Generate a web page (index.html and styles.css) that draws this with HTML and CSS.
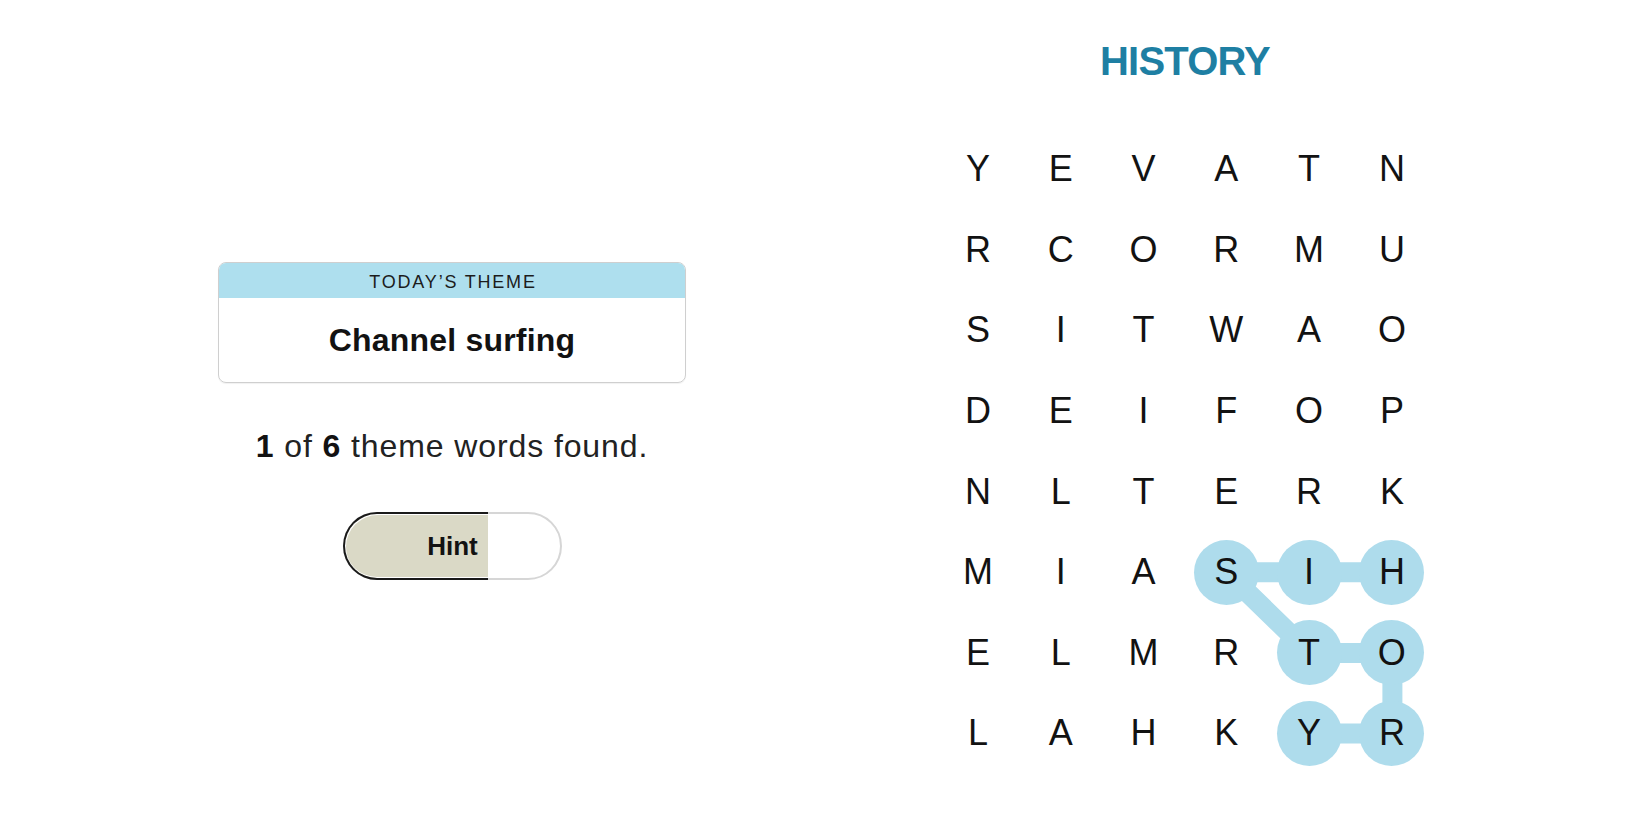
FILE: index.html
```html
<!DOCTYPE html>
<html lang="en">
<head>
<meta charset="utf-8">
<title>Strands</title>
<link rel="stylesheet" href="styles.css">
</head>
<body>
<main class="page">
  <section class="left">
    <div class="theme-card">
      <div class="theme-head">TODAY’S THEME</div>
      <div class="theme-body">Channel surfing</div>
    </div>
    <p class="progress"><b>1</b> of <b>6</b> theme words found.</p>
    <button class="hint" type="button">
      <span class="hint-fill"></span>
      <span class="hint-label">Hint</span>
    </button>
  </section>
  <section class="right">
    <h1 class="word">HISTORY</h1>
    <div class="board">
      <svg class="links" width="497" height="645" viewBox="0 0 497 645" aria-hidden="true">
        <polyline points="455.4,443.3 372.6,443.3 289.8,443.3 372.6,523.9 455.4,523.9 455.4,604.5 372.6,604.5" fill="none" stroke="#aedcec" stroke-width="20" stroke-linejoin="round" stroke-linecap="round"/>
      </svg>
      <span class="cell">Y</span><span class="cell">E</span><span class="cell">V</span><span class="cell">A</span><span class="cell">T</span><span class="cell">N</span>
      <span class="cell">R</span><span class="cell">C</span><span class="cell">O</span><span class="cell">R</span><span class="cell">M</span><span class="cell">U</span>
      <span class="cell">S</span><span class="cell">I</span><span class="cell">T</span><span class="cell">W</span><span class="cell">A</span><span class="cell">O</span>
      <span class="cell">D</span><span class="cell">E</span><span class="cell">I</span><span class="cell">F</span><span class="cell">O</span><span class="cell">P</span>
      <span class="cell">N</span><span class="cell">L</span><span class="cell">T</span><span class="cell">E</span><span class="cell">R</span><span class="cell">K</span>
      <span class="cell">M</span><span class="cell">I</span><span class="cell">A</span><span class="cell"><span class="dot">S</span></span><span class="cell"><span class="dot">I</span></span><span class="cell"><span class="dot">H</span></span>
      <span class="cell">E</span><span class="cell">L</span><span class="cell">M</span><span class="cell">R</span><span class="cell"><span class="dot">T</span></span><span class="cell"><span class="dot">O</span></span>
      <span class="cell">L</span><span class="cell">A</span><span class="cell">H</span><span class="cell">K</span><span class="cell"><span class="dot">Y</span></span><span class="cell"><span class="dot">R</span></span>
    </div>
  </section>
</main>
</body>
</html>
```
FILE: styles.css
```css
* { box-sizing: border-box; }
html, body { margin: 0; padding: 0; background: #fff; }
body {
  width: 1650px;
  height: 825px;
  overflow: hidden;
  font-family: "Liberation Sans", Arial, sans-serif;
  color: #121212;
}
.page {
  display: flex;
  width: 1650px;
  height: 825px;
}
.left {
  width: 904px;
  display: flex;
  flex-direction: column;
  align-items: center;
  padding-top: 262px;
}
.theme-card {
  width: 468px;
  border: 1px solid #cfcfcf;
  border-radius: 8px;
  overflow: hidden;
  box-shadow: 0 1px 1px rgba(0,0,0,0.06);
}
.theme-head {
  height: 35px;
  background: #aedfee;
  display: flex;
  align-items: center;
  justify-content: center;
  font-size: 18px;
  letter-spacing: 1.8px;
  color: #1c1c1c;
  padding-left: 2px;
  padding-top: 3px;
}
.theme-body {
  height: 84px;
  display: flex;
  align-items: center;
  justify-content: center;
  font-size: 32px;
  font-weight: 700;
  letter-spacing: 0.2px;
  color: #121212;
  padding-top: 1px;
}
.progress {
  margin: 43px 0 0;
  font-size: 32px;
  line-height: 40px;
  letter-spacing: 0.9px;
  color: #222;
}
.progress b { font-weight: 700; color: #121212; }
.hint {
  position: relative;
  margin-top: 46px;
  width: 219px;
  height: 68px;
  border-radius: 34px;
  border: 2px solid #d6d6d6;
  background: #fff;
  padding: 0;
  display: flex;
  align-items: center;
  justify-content: center;
  font-family: "Liberation Sans", Arial, sans-serif;
  font-size: 26px;
  font-weight: 700;
  color: #121212;
}
.hint-fill {
  position: absolute;
  left: -2px;
  top: -2px;
  bottom: -2px;
  width: 145px;
  border: 2px solid #1a1a1a;
  border-right: none;
  border-radius: 34px 0 0 34px;
  background: #dad9c6;
  box-shadow: inset 1px 1px 0 #fff, inset 0 -1px 0 #fff;
}
.hint-label { position: relative; padding-left: 1px; }
.right {
  width: 562px;
  display: flex;
  flex-direction: column;
  align-items: center;
  padding-top: 37px;
}
.word {
  margin: 0;
  font-size: 40px;
  line-height: 48px;
  font-weight: 700;
  color: #1e7fa3;
  letter-spacing: -0.8px;
}
.board {
  position: relative;
  margin-top: 44px;
  width: 497px;
  height: 645px;
  display: grid;
  grid-template-columns: repeat(6, 82.8px);
  grid-template-rows: repeat(8, 80.6px);
}
.links {
  position: absolute;
  left: 0;
  top: 0;
}
.cell {
  position: relative;
  display: flex;
  align-items: center;
  justify-content: center;
  font-size: 36px;
  line-height: 36px;
  color: #121212;
}
.dot {
  flex: none;
  width: 65px;
  height: 65px;
  border-radius: 50%;
  background: #aedcec;
  display: flex;
  align-items: center;
  justify-content: center;
}
```
